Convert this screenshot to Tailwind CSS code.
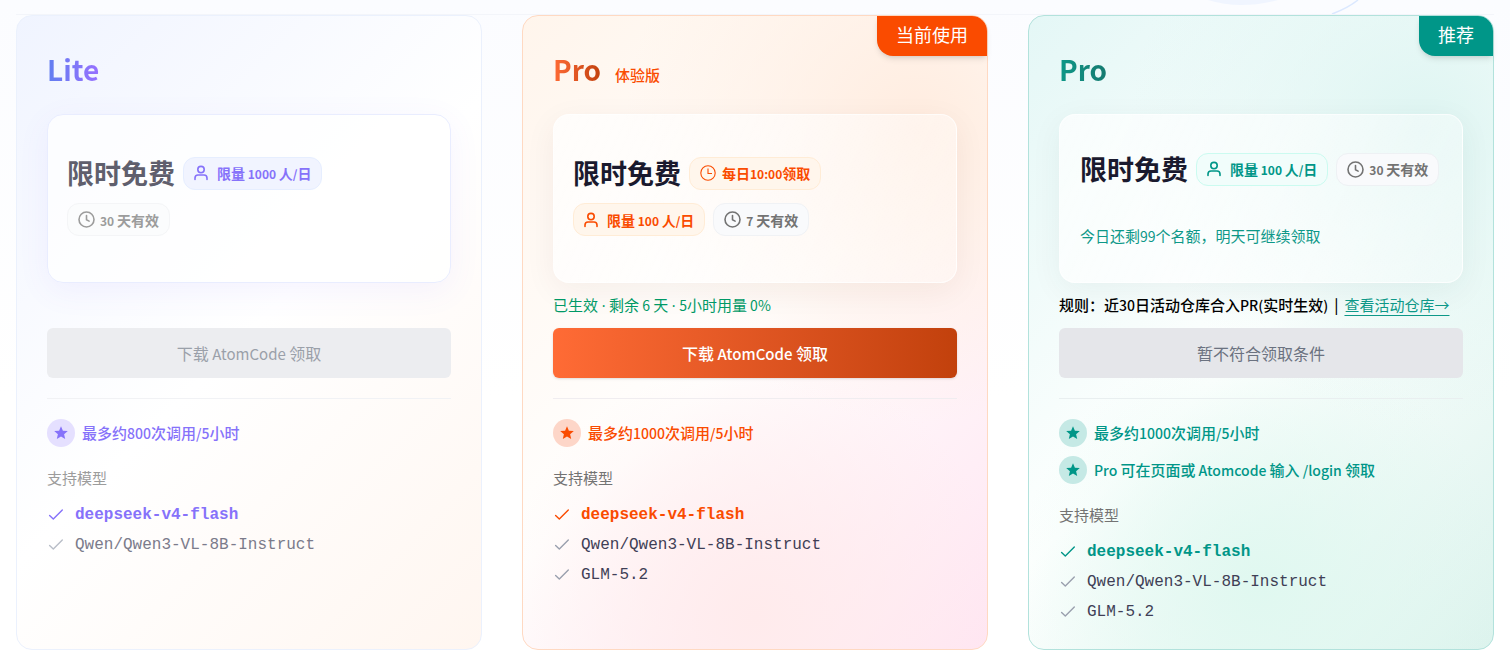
<!DOCTYPE html>
<html lang="zh-CN">
<head>
<meta charset="utf-8">
<meta name="viewport" content="width=device-width, initial-scale=1">
<title>AtomCode 套餐</title>
<script src="https://cdn.jsdelivr.net/npm/@tailwindcss/browser@4"></script>
</head>
<body class="bg-linear-to-b from-[#fbfcff] to-white to-60% font-['Noto_Sans_CJK_SC',sans-serif] text-[15px] leading-[22px]">
<svg class="hidden" aria-hidden="true">
  <symbol id="user" viewBox="0 0 14 16"><g fill="none" stroke="currentColor" stroke-width="1.6" stroke-linecap="round"><circle cx="7" cy="4.6" r="3.2"/><path d="M1 14.4V13a3 3 0 0 1 3-3h6a3 3 0 0 1 3 3v1.400"/></g></symbol>
  <symbol id="clock" viewBox="0 0 17 17"><g fill="none" stroke="currentColor" stroke-width="1.6" stroke-linecap="round" stroke-linejoin="round"><circle cx="8.500" cy="8.500" r="7.500"/><path d="M8.500 4.500v4.300l2.600 1.300"/></g></symbol>
  <symbol id="clock-thin" viewBox="0 0 16 16"><g fill="none" stroke="currentColor" stroke-width="1.100"><circle cx="8" cy="8" r="7.200"/><path d="M8 3.500V8.500h4"/></g></symbol>
  <symbol id="star" viewBox="0 0 14 14"><path fill="currentColor" d="M7 .2l1.900 4.500 4.900.4-3.700 3.200 1.100 4.800L7 10.600l-4.200 2.500 1.100-4.800L.2 5.100l4.900-.4z"/></symbol>
  <symbol id="check" viewBox="0 0 18 18"><path fill="none" stroke="currentColor" stroke-width="1.400" stroke-linecap="round" stroke-linejoin="round" d="M2.600 9.400l3.700 3.500 9-8.900"/></symbol>
</svg>

<div class="relative mx-4 h-[15px] overflow-hidden border-b border-[#f3f5fa]">
  <svg class="absolute right-[124px] top-0 h-[14px] w-[180px]" viewBox="0 0 180 14" fill="none" aria-hidden="true">
    <path d="M18 0Q50 10 88 0z" fill="#f0f5ff"/>
    <path d="M142 14Q158 8 168 0" stroke="#dbe8ff" stroke-width="1.500"/>
  </svg>
</div>

<main class="grid grid-cols-3 gap-10 px-4 pb-[14px]">

  <article class="rounded-2xl border border-[#ebf1fd] bg-linear-135 from-[#f0f4ff] via-white via-50% to-[#fff6f0] px-[30px] pt-[31px] pb-[22px]">
    <h2 class="mb-[19px] h-12 text-[28px] leading-[44px] font-bold"><span class="bg-linear-to-r from-[#5f7df0] to-[#9670ff] bg-clip-text text-transparent">Lite</span></h2>
    <section class="min-h-[169px] rounded-2xl border border-[#e9edff] bg-white/70 px-[19px] pt-[37px] pb-5 shadow-[0_8px_32px_rgba(110,90,255,0.07)]">
      <div class="flex flex-wrap items-center gap-x-2 gap-y-[9px]">
        <strong class="text-[27px] leading-[42px] font-bold text-[#5f5f6d]">限时免费</strong>
        <span class="inline-flex h-[33px] items-center gap-[9px] rounded-xl border border-[#e6eeff] bg-[#f1f4ff] px-[10px] text-sm font-bold text-[#8672fa]"><svg class="h-4 w-[14px]"><use href="#user"/></svg><span>限量<span class="text-xs leading-none"> 1000 </span>人<span class="text-xs leading-none">/</span>日</span></span>
        <span class="inline-flex h-[33px] items-center gap-[5px] rounded-xl border border-[#f4f5f7] bg-[#fbfcfd] px-[10px] text-sm font-bold text-[#9c9c9c]"><svg class="size-[17px]"><use href="#clock"/></svg><span><span class="text-xs leading-none">30 </span>天有效</span></span>
      </div>
    </section>
    <p class="mt-[11px] mb-3 h-[22px]"></p>
    <button disabled class="h-[50px] w-full rounded-md bg-[#ecedf0] text-base text-[#9aa0a9]">下载<span class="text-[15px]"> AtomCode </span>领取</button>
    <hr class="my-5 border-[#f1f2f5]">
    <ul class="flex flex-col gap-[9px] font-medium text-[#8672fa]">
      <li class="flex items-center gap-[7px]"><span class="grid size-7 place-items-center rounded-full bg-[#e5e0ff]"><svg class="size-[14px]"><use href="#star"/></svg></span><span>最多约<span class="text-sm leading-none">800</span>次调用<span class="text-sm leading-none">/5</span>小时</span></li>
    </ul>
    <h3 class="mt-5 text-[#9c9c9c]">支持模型</h3>
    <ul class="mt-[11px] font-['Liberation_Mono',monospace] text-base leading-[30px] text-[#7b7b8b]">
      <li class="flex items-center gap-[10px] font-bold text-[#8672fa]"><svg class="size-[18px]"><use href="#check"/></svg>deepseek-v4-flash</li>
      <li class="flex items-center gap-[10px]"><svg class="size-[18px] text-[#b9bec8]"><use href="#check"/></svg>Qwen/Qwen3-VL-8B-Instruct</li>
    </ul>
  </article>

  <article class="relative rounded-2xl border border-[#ffd9c2] bg-[radial-gradient(circle_at_85%_18%,#ffecdf_0%,transparent_45%),radial-gradient(circle_at_50%_95%,#ffebec_0%,transparent_40%),linear-gradient(135deg,#fff5ec_0%,#fffefd_50%,#ffe5f2_100%)] px-[30px] pt-[31px] pb-[22px]">
    <span class="absolute top-0 right-0 rounded-tr-[15px] rounded-bl-2xl bg-[#fa4b00] px-[19px] pb-1 text-lg leading-9 text-white shadow-md">当前使用</span>
    <h2 class="mb-[19px] flex h-12 items-baseline gap-[14px] text-[28px] leading-[44px] font-bold"><span class="bg-linear-to-r from-[#ff6b35] to-[#c2410c] bg-clip-text text-transparent">Pro</span><span class="text-[15px] leading-none font-medium text-[#fa4b00]">体验版</span></h2>
    <section class="min-h-[169px] rounded-2xl border border-white/70 bg-linear-115 from-white/70 via-white/60 to-white/30 px-[19px] pt-[37px] pb-5 shadow-[0_8px_32px_rgba(80,40,20,0.06)]">
      <div class="flex flex-wrap items-center gap-x-2 gap-y-[9px]">
        <strong class="text-[27px] leading-[42px] font-bold text-[#1a1a2e]">限时免费</strong>
        <span class="inline-flex h-[33px] items-center gap-[6px] rounded-xl border border-[#ffecd6] bg-[#fff6ec] px-[10px] text-sm font-bold text-[#fa4b00]"><svg class="size-4"><use href="#clock-thin"/></svg><span>每日<span class="text-xs leading-none">10:00</span>领取</span></span>
        <span class="inline-flex h-[33px] items-center gap-[9px] rounded-xl border border-[#ffecd6] bg-[#fff6ec] px-[10px] text-sm font-bold text-[#fa4b00]"><svg class="h-4 w-[14px]"><use href="#user"/></svg><span>限量<span class="text-xs leading-none"> 100 </span>人<span class="text-xs leading-none">/</span>日</span></span>
        <span class="inline-flex h-[33px] items-center gap-[5px] rounded-xl border border-[#f0f2f5] bg-[#f9fafc] px-[10px] text-sm font-bold text-[#737373]"><svg class="size-[17px]"><use href="#clock"/></svg><span><span class="text-xs leading-none">7 </span>天有效</span></span>
      </div>
    </section>
    <p class="mt-[11px] mb-3 h-[22px] text-[#009966]">已生效<span class="font-['Noto_Sans'] text-sm leading-none"> · </span>剩余<span class="text-sm leading-none"> 6 </span>天<span class="font-['Noto_Sans'] text-sm leading-none"> · </span><span class="text-sm leading-none">5</span>小时用量<span class="text-sm leading-none"> 0%</span></p>
    <button class="h-[50px] w-full rounded-md bg-linear-to-r from-[#ff6b35] to-[#c2410c] text-base font-medium text-white shadow-sm">下载<span class="text-[15px]"> AtomCode </span>领取</button>
    <hr class="my-5 border-[#f0edf0]">
    <ul class="flex flex-col gap-[9px] font-medium text-[#fa4b00]">
      <li class="flex items-center gap-[7px]"><span class="grid size-7 place-items-center rounded-full bg-[#fdd6c8]"><svg class="size-[14px]"><use href="#star"/></svg></span><span>最多约<span class="text-sm leading-none">1000</span>次调用<span class="text-sm leading-none">/5</span>小时</span></li>
    </ul>
    <h3 class="mt-5 text-[#737373]">支持模型</h3>
    <ul class="mt-[11px] font-['Liberation_Mono',monospace] text-base leading-[30px] text-[#3f3f56]">
      <li class="flex items-center gap-[10px] font-bold text-[#fa4b00]"><svg class="size-[18px]"><use href="#check"/></svg>deepseek-v4-flash</li>
      <li class="flex items-center gap-[10px]"><svg class="size-[18px] text-[#9aa0ae]"><use href="#check"/></svg>Qwen/Qwen3-VL-8B-Instruct</li>
      <li class="flex items-center gap-[10px]"><svg class="size-[18px] text-[#9aa0ae]"><use href="#check"/></svg>GLM-5.2</li>
    </ul>
  </article>

  <article class="relative rounded-2xl border border-[#b2e2dc] bg-[radial-gradient(circle_at_85%_18%,#def5f2_0%,transparent_45%),radial-gradient(circle_at_50%_90%,#e0f8f0_0%,transparent_40%),linear-gradient(135deg,#e4f7f6_0%,#fdfffe_50%,#dcf3ed_100%)] px-[30px] pt-[31px] pb-[22px]">
    <span class="absolute top-0 right-0 rounded-tr-[15px] rounded-bl-2xl bg-[#009688] px-[19px] pb-1 text-lg leading-9 text-white shadow-md">推荐</span>
    <h2 class="mb-[19px] h-12 text-[28px] leading-[44px] font-bold"><span class="bg-linear-to-r from-[#0d9888] to-[#157a70] bg-clip-text text-transparent">Pro</span></h2>
    <section class="min-h-[169px] rounded-2xl border border-white/70 bg-linear-115 from-white/70 via-white/60 to-white/30 px-5 pt-[33px] pb-5 shadow-[0_8px_32px_rgba(20,70,60,0.06)]">
      <div class="flex flex-wrap items-center gap-x-2 gap-y-[9px]">
        <strong class="text-[27px] leading-[42px] font-bold text-[#1a1a2e]">限时免费</strong>
        <span class="inline-flex h-[33px] items-center gap-[9px] rounded-xl border border-[#cbfbf0] bg-[#f1fdfb] px-[10px] text-sm font-bold text-[#009688]"><svg class="h-4 w-[14px]"><use href="#user"/></svg><span>限量<span class="text-xs leading-none"> 100 </span>人<span class="text-xs leading-none">/</span>日</span></span>
        <span class="inline-flex h-[33px] items-center gap-[5px] rounded-xl border border-[#eef1f4] bg-[#f9fafc] px-[10px] text-sm font-bold text-[#737373]"><svg class="size-[17px]"><use href="#clock"/></svg><span><span class="text-xs leading-none">30 </span>天有效</span></span>
      </div>
      <p class="mt-[35px] text-[#0d9888]">今日还剩<span class="text-sm leading-none">99</span>个名额，明天可继续领取</p>
    </section>
    <p class="mt-[11px] mb-3 h-[22px] font-medium whitespace-nowrap text-black">规则：近<span class="text-sm leading-none">30</span>日活动仓库合入<span class="text-sm leading-none">PR(</span>实时生效<span class="text-sm leading-none">)</span><span class="mx-[6px]">|</span><a href="#" class="font-normal text-[#0d9888] underline underline-offset-4">查看活动仓库→</a></p>
    <button disabled class="h-[50px] w-full rounded-md bg-[#e5e6ea] text-base text-[#6b7280]">暂不符合领取条件</button>
    <hr class="my-5 border-[#e9eff0]">
    <ul class="flex flex-col gap-[9px] font-medium text-[#009688]">
      <li class="flex items-center gap-[7px]"><span class="grid size-7 place-items-center rounded-full bg-[#c5e9e5]"><svg class="size-[14px]"><use href="#star"/></svg></span><span>最多约<span class="text-sm leading-none">1000</span>次调用<span class="text-sm leading-none">/5</span>小时</span></li>
      <li class="flex items-center gap-[7px]"><span class="grid size-7 place-items-center rounded-full bg-[#c5e9e5]"><svg class="size-[14px]"><use href="#star"/></svg></span><span><span class="text-sm leading-none">Pro </span>可在页面或<span class="text-sm leading-none"> Atomcode </span>输入<span class="text-sm leading-none"> /login </span>领取</span></li>
    </ul>
    <h3 class="mt-5 text-[#737373]">支持模型</h3>
    <ul class="mt-[11px] font-['Liberation_Mono',monospace] text-base leading-[30px] text-[#3f3f56]">
      <li class="flex items-center gap-[10px] font-bold text-[#009688]"><svg class="size-[18px]"><use href="#check"/></svg>deepseek-v4-flash</li>
      <li class="flex items-center gap-[10px]"><svg class="size-[18px] text-[#9aa0ae]"><use href="#check"/></svg>Qwen/Qwen3-VL-8B-Instruct</li>
      <li class="flex items-center gap-[10px]"><svg class="size-[18px] text-[#9aa0ae]"><use href="#check"/></svg>GLM-5.2</li>
    </ul>
  </article>
</main>
</body>
</html>
